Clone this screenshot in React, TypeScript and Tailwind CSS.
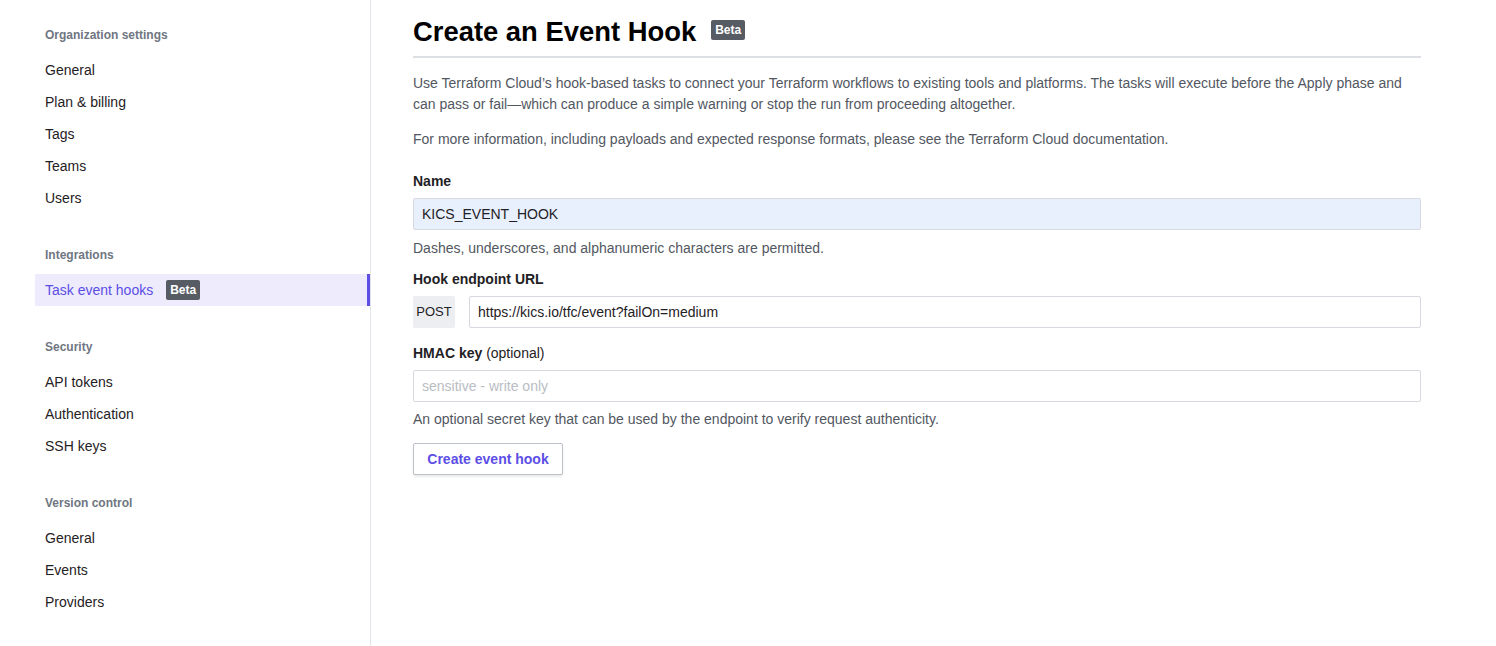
const sections = [
  { title: 'Organization settings', items: ['General', 'Plan & billing', 'Tags', 'Teams', 'Users'] },
  { title: 'Integrations', items: ['Task event hooks'] },
  { title: 'Security', items: ['API tokens', 'Authentication', 'SSH keys'] },
  { title: 'Version control', items: ['General', 'Events', 'Providers'] },
]

function Badge() {
  return (
    <span className="inline-flex items-center h-[20px] px-[4px] rounded-[2px] bg-[#575b63] text-white text-[12px] font-bold leading-none">
      Beta
    </span>
  )
}

function Sidebar() {
  return (
    <aside className="w-[371px] shrink-0 border-r border-[#e1e3e8] pl-[35px] pt-[26px] min-h-[646px]">
      {sections.map((s, i) => (
        <div key={s.title} className={i > 0 ? 'mt-[32px]' : ''}>
          <p className="pl-[10px] text-[12px] leading-[18px] font-semibold text-[#6f7682] mb-[10px]">{s.title}</p>
          <ul>
            {s.items.map((item) =>
              item === 'Task event hooks' ? (
                <li
                  key={item}
                  className="h-8 flex items-center gap-[13px] pl-[10px] bg-[#edebfc] border-r-[3px] border-[#5c4ee5] text-[14px] text-[#5c4ee5]"
                >
                  {item}
                  <Badge />
                </li>
              ) : (
                <li key={item} className="h-8 flex items-center pl-[10px] text-[14px] text-[#1f2124]">
                  {item}
                </li>
              ),
            )}
          </ul>
        </div>
      ))}
    </aside>
  )
}

export default function App() {
  return (
    <div className="flex bg-white min-h-[646px] font-['Liberation_Sans',Arial,sans-serif]">
      <Sidebar />
      <main className="pl-[42px] pt-[12px] w-[1050px]">
        <div className="flex items-center gap-[15px] border-b-2 border-[#dcdfe4] pb-[4px]">
          <h1 className="text-[27.4px] leading-[40px] font-bold text-black">Create an Event Hook</h1>
          <span className="-mt-[6px]"><Badge /></span>
        </div>

        <p className="mt-[14.5px] text-[14px] leading-[21px] text-[#525761]">
          Use Terraform Cloud’s hook-based tasks to connect your Terraform workflows to existing tools and platforms. The tasks will execute before the Apply phase and
          <br />
          can pass or fail—which can produce a simple warning or stop the run from proceeding altogether.
        </p>
        <p className="mt-[14px] text-[14px] leading-[21px] text-[#525761]">
          For more information, including payloads and expected response formats, please see the Terraform Cloud documentation.
        </p>

        <label className="block mt-[21px] text-[14px] leading-[21px] font-bold text-[#1f2124]">Name</label>
        <div className="mt-[6.5px] h-8 flex items-center px-[8px] bg-[#e8f0fe] border border-[#d6dae0] rounded-[2px] text-[14px] text-[#1f2124]">
          KICS_EVENT_HOOK
        </div>
        <p className="mt-[7.5px] text-[14px] leading-[21px] text-[#525761]">Dashes, underscores, and alphanumeric characters are permitted.</p>

        <label className="block mt-[10px] text-[14px] leading-[21px] font-bold text-[#1f2124]">Hook endpoint URL</label>
        <div className="mt-[6.5px] flex items-center gap-[14px]">
          <span className="h-8 w-[42px] flex items-center justify-center bg-[#eceef2] rounded-[2px] text-[13px] text-[#1f2124]">POST</span>
          <div className="flex-1 h-8 flex items-center px-[8px] bg-white border border-[#d6dae0] rounded-[2px] text-[14px] text-[#1f2124]">
            https://kics.io/tfc/event?failOn=medium
          </div>
        </div>

        <label className="block mt-[14.5px] text-[14px] leading-[21px] text-[#1f2124]">
          <span className="font-bold">HMAC key</span> (optional)
        </label>
        <div className="mt-[6.5px] h-8 flex items-center px-[8px] bg-white border border-[#d6dae0] rounded-[2px] text-[14px] text-[#b9bdc4]">
          sensitive - write only
        </div>
        <p className="mt-[6.5px] text-[14px] leading-[21px] text-[#525761]">An optional secret key that can be used by the endpoint to verify request authenticity.</p>

        <button className="mt-[13.5px] h-8 w-[150px] bg-white border border-[#bcc0c9] rounded-[2px] shadow-[0_2px_2px_rgba(0,0,0,0.08)] text-[14px] font-bold text-[#5c4ee5]">
          Create event hook
        </button>
      </main>
    </div>
  )
}
